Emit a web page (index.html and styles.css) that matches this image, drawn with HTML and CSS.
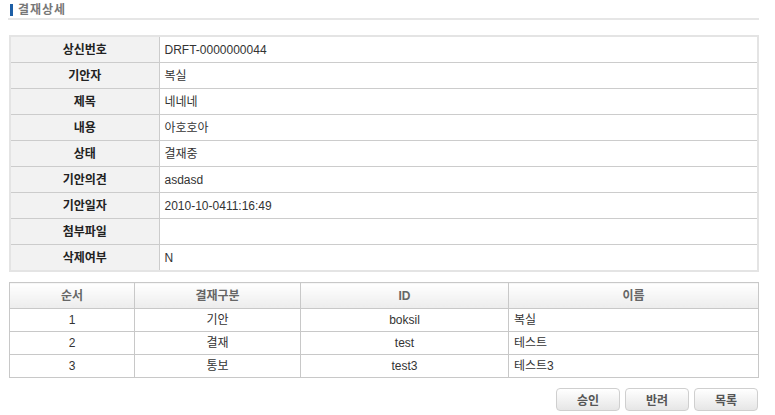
FILE: index.html
```html
<!DOCTYPE html>
<html>
<head>
  <meta charset="utf-8">
  <title>결재상세</title>
  <link rel="stylesheet" href="styles.css">
</head>
<body>
  <div class="page">
    <h2 class="title"><span class="title-bar"></span>결재상세</h2>

    <div class="detail-box">
      <table class="detail">
        <colgroup><col class="label-col"><col></colgroup>
        <tr><th>상신번호</th><td>DRFT-0000000044</td></tr>
        <tr><th>기안자</th><td>복실</td></tr>
        <tr><th>제목</th><td>네네네</td></tr>
        <tr><th>내용</th><td>아호호아</td></tr>
        <tr><th>상태</th><td>결재중</td></tr>
        <tr><th>기안의견</th><td>asdasd</td></tr>
        <tr><th>기안일자</th><td>2010-10-0411:16:49</td></tr>
        <tr><th>첨부파일</th><td></td></tr>
        <tr><th>삭제여부</th><td>N</td></tr>
      </table>
    </div>

    <table class="line">
      <colgroup>
        <col style="width:125px"><col style="width:166px"><col style="width:208px"><col>
      </colgroup>
      <tr><th>순서</th><th>결재구분</th><th>ID</th><th>이름</th></tr>
      <tr><td>1</td><td>기안</td><td>boksil</td><td class="name">복실</td></tr>
      <tr><td>2</td><td>결재</td><td>test</td><td class="name">테스트</td></tr>
      <tr><td>3</td><td>통보</td><td>test3</td><td class="name">테스트3</td></tr>
    </table>

    <div class="buttons">
      <button class="btn">승인</button>
      <button class="btn">반려</button>
      <button class="btn">목록</button>
    </div>
  </div>
</body>
</html>
```

FILE: styles.css
```css
/* page */
body {
  margin: 0;
  font-family: "Liberation Sans", "Noto Sans CJK KR", sans-serif;
  font-size: 12px;
  line-height: 14px;
  color: #333;
  background: #fff;
}
.page {
  padding: 3px 16px 0 8px;
}

/* title */
.title {
  display: flex;
  align-items: center;
  margin: 0;
  height: 14px;
  padding-bottom: 1px;
  border-bottom: 2px solid #e6e6e6;
  font-size: 12px;
  font-weight: bold;
  color: #777;
  letter-spacing: 1px;
}
.title-bar {
  display: inline-block;
  width: 3px;
  height: 12px;
  margin: 0 5px 0 2px;
  background: #1d5fa6;
}

/* detail table */
.detail-box {
  width: 746px;
  margin: 15px 0 0 1px;
  border: 2px solid #e4e4e4;
}
.detail {
  width: 100%;
  border-collapse: collapse;
  table-layout: fixed;
}
.label-col {
  width: 148px;
}
.detail th,
.detail td {
  height: 25px;
  padding: 0;
  border-bottom: 1px solid #cccccc;
}
.detail tr:last-child th,
.detail tr:last-child td {
  border-bottom: none;
}
.detail th {
  background: #f2f2f2;
  border-right: 1px solid #cccccc;
  color: #222;
  font-weight: bold;
  text-align: center;
}
.detail td {
  padding-left: 5px;
  color: #333;
}

/* approval line table */
.line {
  width: 750px;
  margin: 10px 0 0 1px;
  border-collapse: collapse;
  table-layout: fixed;
}
.line th,
.line td {
  border: 1px solid #c8c8c8;
  padding: 0;
  text-align: center;
  color: #333;
}
.line th {
  height: 25px;
  background: linear-gradient(#ffffff, #ececec);
  color: #666;
  font-weight: bold;
}
.line td {
  height: 22px;
}
.line td.name {
  text-align: left;
  padding-left: 5px;
}

/* buttons */
.buttons {
  display: flex;
  justify-content: flex-end;
  gap: 5px;
  width: 750px;
  margin-top: 10px;
}
.btn {
  width: 64px;
  height: 23px;
  padding: 0;
  border: 1px solid #cfcfcf;
  border-radius: 4px;
  background: linear-gradient(#ffffff, #e6e6e6);
  font-family: "Liberation Sans", "Noto Sans CJK KR", sans-serif;
  font-size: 12px;
  font-weight: bold;
  color: #555;
  cursor: pointer;
}
```
